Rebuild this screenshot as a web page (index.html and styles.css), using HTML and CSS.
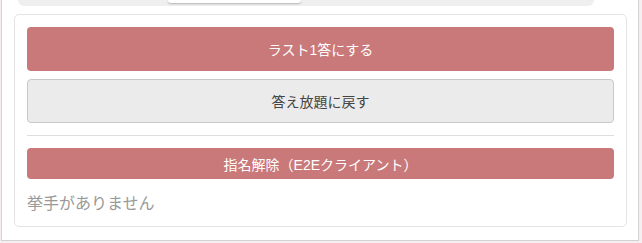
FILE: index.html
```html
<!DOCTYPE html>
<html lang="ja">
<head>
<meta charset="utf-8">
<link rel="stylesheet" href="styles.css">
</head>
<body>
<div class="frame">
  <div class="topbar"><div class="tab"></div></div>
  <div class="card">
    <button class="btn btn-red btn-tall">ラスト1答にする</button>
    <button class="btn btn-gray btn-tall">答え放題に戻す</button>
    <hr class="divider">
    <button class="btn btn-red btn-short">指名解除（E2Eクライアント）</button>
    <p class="empty">挙手がありません</p>
  </div>
</div>
</body>
</html>
```

FILE: styles.css
```css
* { box-sizing: border-box; }
html, body { margin: 0; padding: 0; }
body {
  background: #f6eef1;
  font-family: "Liberation Sans", "Noto Sans CJK JP", sans-serif;
  width: 642px;
  height: 243px;
  overflow: hidden;
}
.frame {
  margin-left: 1px;
  width: 638px;
  height: 241px;
  background: #fff;
  border: 1px solid #d2d2d2;
  border-top: none;
  display: flex;
  flex-direction: column;
}
.topbar {
  margin-left: 16px;
  width: 576px;
  height: 6px;
  background: #efefef;
  border-radius: 0 0 10px 10px;
}
.tab {
  margin-left: 150px;
  width: 133px;
  height: 3px;
  background: #fff;
  border-radius: 0 0 8px 8px;
  box-shadow: 0 1px 2px rgba(0,0,0,0.25);
}
.card {
  margin: 8px 0 0 12px;
  width: 613px;
  height: 213px;
  border: 1px solid #e4e4e4;
  border-radius: 5px;
  padding: 12px;
  display: flex;
  flex-direction: column;
}
.btn {
  display: flex;
  align-items: center;
  justify-content: center;
  flex: none;
  width: 100%;
  border-radius: 4px;
  font-family: "Liberation Sans", "Noto Sans CJK JP", sans-serif;
  font-size: 14px;
  padding: 0;
  margin: 0;
}
.btn-red {
  background: #c97979;
  color: #fff;
  border: none;
}
.btn-gray {
  background: #ebebeb;
  color: #444;
  border: 1px solid #c9c9c9;
  margin-top: 8px;
}
.btn-tall { height: 44px; }
.btn-short { height: 31px; }
.divider {
  flex: none;
  margin: 12px 0 12px;
  border: none;
  border-top: 1px solid #dedede;
  height: 1px;
}
.empty {
  flex: none;
  margin: 12px 0 0;
  font-size: 16px;
  line-height: 26px;
  color: #999;
}
```
